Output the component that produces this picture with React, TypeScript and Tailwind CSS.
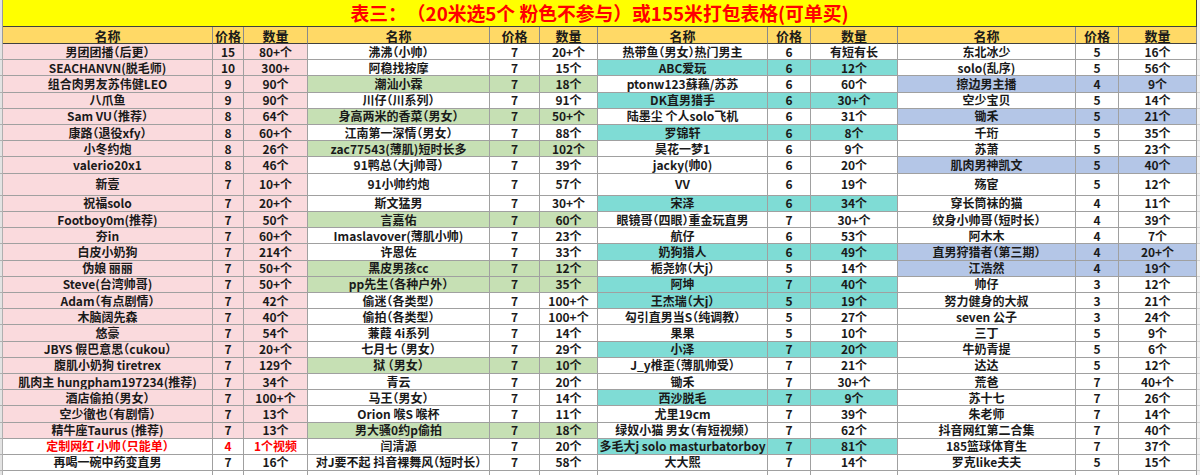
import React from "react";

type R = [string, string, string, string];

const g1: R[] = [
  ["男团团播（后更）", "15", "80+个", "p"],
  ["SEACHANVN(脱毛师)", "10", "300+", "p"],
  ["组合肉男友苏伟健LEO", "9", "90个", "p"],
  ["八爪鱼", "9", "90个", "p"],
  ["Sam VU（推荐）", "8", "64个", "p"],
  ["康路（退役xfy）", "8", "60+个", "p"],
  ["小冬约炮", "8", "26个", "p"],
  ["valerio20x1", "8", "46个", "p"],
  ["新壹", "7", "10+个", "p"],
  ["祝福solo", "7", "20+个", "p"],
  ["Footboy0m(推荐)", "7", "50个", "p"],
  ["夯in", "7", "60+个", "p"],
  ["白皮小奶狗", "7", "214个", "p"],
  ["伪娘 丽丽", "7", "50+个", "p"],
  ["Steve(台湾帅哥)", "7", "50+个", "p"],
  ["Adam（有点剧情）", "7", "42个", "p"],
  ["木脑阔先森", "7", "40个", "p"],
  ["悠豪", "7", "54个", "p"],
  ["JBYS 假巴意思（cukou）", "7", "20+个", "p"],
  ["腹肌小奶狗 tiretrex", "7", "129个", "p"],
  ["肌肉主 hungpham197234(推荐)", "7", "34个", "p"],
  ["酒店偷拍（男女）", "7", "100+个", "p"],
  ["空少徹也（有剧情）", "7", "13个", "p"],
  ["精牛座Taurus (推荐)", "7", "13个", "p"],
  ["定制网红 小帅（只能单）", "4", "1个视频", "r"],
  ["再喝一碗中药变直男", "7", "16个", "w"],
];

const g2: R[] = [
  ["沸沸（小帅）", "7", "20+个", "w"],
  ["阿稳找按摩", "7", "15个", "w"],
  ["潮汕小霖", "7", "18个", "g"],
  ["川仔（川系列）", "7", "91个", "w"],
  ["身高两米的香菜（男女）", "7", "50+个", "g"],
  ["江南第一深情（男女）", "7", "88个", "w"],
  ["zac77543(薄肌)短时长多", "7", "102个", "g"],
  ["91鸭总（大j帅哥）", "7", "39个", "w"],
  ["91小帅约炮", "7", "57个", "w"],
  ["斯文猛男", "7", "30+个", "w"],
  ["言嘉佑", "7", "60个", "g"],
  ["Imaslavover(薄肌小帅)", "7", "23个", "w"],
  ["许恩佐", "7", "33个", "w"],
  ["黑皮男孩cc", "7", "12个", "g"],
  ["pp先生（各种户外）", "7", "35个", "g"],
  ["偷迷（各类型）", "7", "100+个", "w"],
  ["偷拍（各类型）", "7", "100+个", "w"],
  ["蒹葭 4i系列", "7", "14个", "w"],
  ["七月七 （男女）", "7", "29个", "w"],
  ["狱 （男女）", "7", "10个", "g"],
  ["青云", "7", "20个", "w"],
  ["马王（男女）", "7", "14个", "w"],
  ["Orion 喉S 喉杯", "7", "11个", "w"],
  ["男大骚0约p偷拍", "7", "18个", "g"],
  ["闫清源", "7", "20个", "w"],
  ["对J要不起 抖音裸舞风（短时长）", "7", "58个", "w"],
];

const g3: R[] = [
  ["热带鱼（男女）热门男主", "6", "有短有长", "w"],
  ["ABC爱玩", "6", "12个", "t"],
  ["ptonw123蘇蘓/苏苏", "6", "60个", "w"],
  ["DK直男猎手", "6", "30+个", "t"],
  ["陆墨尘 个人solo飞机", "6", "31个", "w"],
  ["罗锦轩", "6", "8个", "t"],
  ["昊花一梦1", "6", "9个", "w"],
  ["jacky(帅0)", "6", "20个", "w"],
  ["VV", "6", "19个", "w"],
  ["宋泽", "6", "34个", "t"],
  ["眼镜哥（四眼）重金玩直男", "7", "30+个", "w"],
  ["航仔", "6", "53个", "w"],
  ["奶狗猎人", "6", "49个", "t"],
  ["栀尧妳（大j）", "5", "14个", "w"],
  ["阿坤", "7", "40个", "t"],
  ["王杰瑞（大j）", "5", "19个", "t"],
  ["勾引直男当S（纯调教）", "5", "27个", "w"],
  ["果果", "5", "10个", "w"],
  ["小泽", "7", "20个", "t"],
  ["J_y椎歪（薄肌帅受）", "7", "21个", "w"],
  ["锄禾", "7", "30+个", "w"],
  ["西沙脱毛", "7", "9个", "t"],
  ["尤里19cm", "7", "39个", "w"],
  ["绿奴小猫 男女（有短视频）", "7", "62个", "w"],
  ["多毛大j solo masturbatorboy", "7", "81个", "t"],
  ["大大熙", "7", "14个", "w"],
];

const g4: R[] = [
  ["东北冰少", "5", "16个", "w"],
  ["solo(乱序)", "5", "56个", "w"],
  ["擦边男主播", "4", "9个", "b"],
  ["空少宝贝", "5", "14个", "w"],
  ["锄禾", "5", "21个", "b"],
  ["千珩", "5", "35个", "w"],
  ["苏萧", "5", "23个", "w"],
  ["肌肉男神凯文", "5", "40个", "b"],
  ["殇宦", "5", "12个", "w"],
  ["穿长筒袜的猫", "4", "11个", "w"],
  ["纹身小帅哥（短时长）", "4", "39个", "w"],
  ["阿木木", "4", "7个", "w"],
  ["直男狩猎者（第三期）", "4", "20+个", "b"],
  ["江浩然", "4", "19个", "b"],
  ["帅仔", "3", "12个", "w"],
  ["努力健身的大叔", "3", "21个", "w"],
  ["seven 公子", "3", "24个", "w"],
  ["三丁", "5", "9个", "w"],
  ["牛奶青提", "5", "6个", "w"],
  ["达达", "5", "12个", "w"],
  ["荒爸", "7", "40+个", "w"],
  ["苏十七", "7", "26个", "w"],
  ["朱老师", "7", "14个", "w"],
  ["抖音网红第二合集", "7", "40个", "w"],
  ["185篮球体育生", "7", "37个", "w"],
  ["罗克like夫夫", "5", "15个", "w"],
];

const BG: Record<string, string> = {
  w: "bg-white",
  r: "bg-white",
  p: "bg-[#fadadd]",
  g: "bg-[#c6e0b4]",
  t: "bg-[#7fdcd5]",
  b: "bg-[#b4c6e7]",
};

function Cell({ text, color, tall }: { text: string; color: string; tall: boolean }) {
  const h = tall ? "h-[22.4px]" : "h-[16.2px]";
  const fg = color === "r" ? "text-[#ff0000]" : "text-[#1a1a1a]";
  return (
    <div
      className={`${BG[color]} ${h} ${fg} border-r border-b border-[#a0a0a0] flex items-center justify-center whitespace-nowrap overflow-hidden text-[12px] font-bold leading-none [font-feature-settings:'halt']`}
    >
      {text}
    </div>
  );
}

function Head({ text }: { text: string }) {
  return (
    <div className="h-[17px] bg-[#ffd966] border-r border-b border-b-[#404040] border-r-[#8a8a8a] flex items-center justify-center text-[13px] font-bold leading-none text-[#1a1a1a]">
      {text}
    </div>
  );
}

export default function App() {
  const groups = [g1, g2, g3, g4];
  return (
    <div className="w-[1200px] h-[475px] overflow-hidden bg-white font-['Noto_Sans_CJK_SC','Noto_Sans',sans-serif]">
      <div className="grid grid-cols-[3px_210px_31px_64px_182px_50px_58px_170px_43px_87px_178px_43px_78px_3px]">
        <div className="h-[27px] bg-[#e3e3e3] border-r border-[#9a9a9a]" />
        <div className="col-span-12 h-[27px] bg-[#ffff00] border-b border-r border-[#404040] flex items-center justify-center text-[18.8px] font-bold leading-none text-[#ff0000] [text-spacing-trim:space-all]">
          表三：（20米选5个 粉色不参与）或155米打包表格(可单买)
        </div>
        <div className="h-[27px] bg-[#f2f2f2]" />

        <div className="h-[17px] bg-[#e3e3e3] border-r border-[#9a9a9a]" />
        {groups.map((_, gi) => (
          <React.Fragment key={gi}>
            <Head text="名称" />
            <Head text="价格" />
            <Head text="数量" />
          </React.Fragment>
        ))}
        <div className="h-[17px] bg-[#f2f2f2]" />

        {g1.map((_, ri) => {
          const tall = ri === 8;
          const sh = tall ? "h-[22.4px]" : "h-[16.2px]";
          return (
            <React.Fragment key={ri}>
              <div className={`${sh} bg-[#e3e3e3] border-r border-b border-[#b0b0b0]`} />
              {groups.map((g, gi) => {
                const row = g[ri];
                return (
                  <React.Fragment key={gi}>
                    <Cell text={row[0]} color={row[3]} tall={tall} />
                    <Cell text={row[1]} color={row[3]} tall={tall} />
                    <Cell text={row[2]} color={row[3]} tall={tall} />
                  </React.Fragment>
                );
              })}
              <div className={`${sh} bg-[#f2f2f2] border-b border-[#d0d0d0]`} />
            </React.Fragment>
          );
        })}

        <div className="h-[16px] bg-[#e3e3e3] border-r border-[#b0b0b0]" />
        {Array.from({ length: 12 }).map((_, i) => (
          <div key={i} className="h-[16px] bg-white border-r border-[#a0a0a0]" />
        ))}
        <div className="h-[16px] bg-[#f2f2f2]" />
      </div>
    </div>
  );
}
